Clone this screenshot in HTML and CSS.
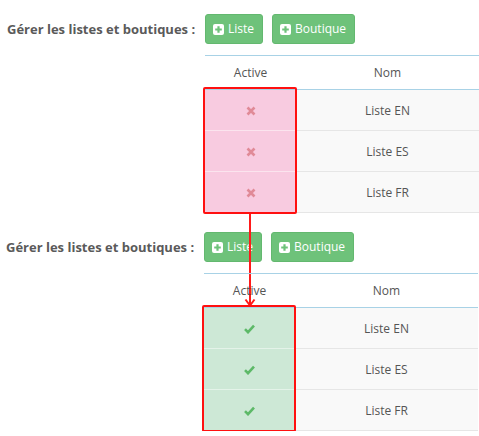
FILE: index.html
```html
<!DOCTYPE html>
<html lang="fr">
<head>
<meta charset="utf-8">
<title>Gérer les listes et boutiques</title>
<link rel="stylesheet" href="styles.css">
</head>
<body>
<div class="page">
  <section class="manage">
    <div class="manage-label">Gérer les listes et boutiques :</div>
    <div class="manage-actions">
      <button class="btn" type="button"><svg class="btn-icon" viewBox="0 0 11 11"><rect width="11" height="11" rx="2" fill="#fff"/><path d="M4.4 2.2h2.2v2.2h2.2v2.2H6.6v2.2H4.4V6.6H2.2V4.4h2.2z" fill="#6ec27a"/></svg>Liste</button>
      <button class="btn" type="button"><svg class="btn-icon" viewBox="0 0 11 11"><rect width="11" height="11" rx="2" fill="#fff"/><path d="M4.4 2.2h2.2v2.2h2.2v2.2H6.6v2.2H4.4V6.6H2.2V4.4h2.2z" fill="#6ec27a"/></svg>Boutique</button>
    </div>
    <div class="lists-wrap">
      <table class="lists">
        <colgroup><col class="col-active"><col></colgroup>
        <thead><tr><th>Active</th><th>Nom</th></tr></thead>
        <tbody>
          <tr><td class="state state--off"><svg class="ico-x" viewBox="0 0 10 10"><path d="M1.5 1.5l7 7M8.5 1.5l-7 7"/></svg></td><td>Liste EN</td></tr>
          <tr><td class="state state--off"><svg class="ico-x" viewBox="0 0 10 10"><path d="M1.5 1.5l7 7M8.5 1.5l-7 7"/></svg></td><td>Liste ES</td></tr>
          <tr><td class="state state--off"><svg class="ico-x" viewBox="0 0 10 10"><path d="M1.5 1.5l7 7M8.5 1.5l-7 7"/></svg></td><td>Liste FR</td></tr>
        </tbody>
      </table>
      <div class="highlight"></div>
    </div>
  </section>

  <svg class="arrow" viewBox="0 0 12 93"><path d="M6 0V91"/><path d="M1.5 85.5L6 91.5 10.5 85.5"/></svg>

  <section class="manage manage--after">
    <div class="manage-label">Gérer les listes et boutiques :</div>
    <div class="manage-actions">
      <button class="btn" type="button"><svg class="btn-icon" viewBox="0 0 11 11"><rect width="11" height="11" rx="2" fill="#fff"/><path d="M4.4 2.2h2.2v2.2h2.2v2.2H6.6v2.2H4.4V6.6H2.2V4.4h2.2z" fill="#6ec27a"/></svg>Liste</button>
      <button class="btn" type="button"><svg class="btn-icon" viewBox="0 0 11 11"><rect width="11" height="11" rx="2" fill="#fff"/><path d="M4.4 2.2h2.2v2.2h2.2v2.2H6.6v2.2H4.4V6.6H2.2V4.4h2.2z" fill="#6ec27a"/></svg>Boutique</button>
    </div>
    <div class="lists-wrap">
      <table class="lists">
        <colgroup><col class="col-active"><col></colgroup>
        <thead><tr><th>Active</th><th>Nom</th></tr></thead>
        <tbody>
          <tr><td class="state state--on"><svg class="ico-check" viewBox="0 0 12 10"><path d="M1.5 5.2l3 3 6-6.5"/></svg></td><td>Liste EN</td></tr>
          <tr><td class="state state--on"><svg class="ico-check" viewBox="0 0 12 10"><path d="M1.5 5.2l3 3 6-6.5"/></svg></td><td>Liste ES</td></tr>
          <tr><td class="state state--on"><svg class="ico-check" viewBox="0 0 12 10"><path d="M1.5 5.2l3 3 6-6.5"/></svg></td><td>Liste FR</td></tr>
        </tbody>
      </table>
      <div class="highlight"></div>
    </div>
  </section>
</div>
</body>
</html>
```

FILE: styles.css
```css
html, body {
  margin: 0;
  padding: 0;
  background: #fff;
  overflow: hidden;
}

body {
  font-family: "Open Sans", "Liberation Sans", sans-serif;
  color: #555;
}

.page {
  position: relative;
  padding-top: 14px;
}

.manage {
  display: grid;
  grid-template-columns: 205px 274px;
  row-gap: 11px;
}

.manage--after {
  margin-top: 19px;
  margin-left: -1px;
}

.manage-label {
  align-self: center;
  padding-left: 7px;
  font-size: 13px;
  font-weight: 700;
  color: #5a5a5a;
  white-space: nowrap;
}

.manage-actions {
  display: flex;
  gap: 9px;
}

.btn {
  display: inline-flex;
  align-items: center;
  gap: 4px;
  height: 30px;
  padding: 0 8px 0 7px;
  border: 1px solid #63b86f;
  border-radius: 3px;
  background: #6ec27a;
  color: #fff;
  font-family: "Open Sans", "Liberation Sans", sans-serif;
  font-size: 12px;
  line-height: 1;
}

.btn-icon {
  width: 11px;
  height: 11px;
  display: block;
}

.lists-wrap {
  grid-column: 2;
  position: relative;
}

.lists {
  width: 274px;
  border-collapse: collapse;
  table-layout: fixed;
  font-size: 12px;
}

.col-active {
  width: 91px;
}

.lists th {
  height: 33px;
  padding: 0;
  font-weight: 400;
  color: #555;
  text-align: center;
  vertical-align: middle;
  border-top: 1px solid #a8d2e6;
  border-bottom: 1px solid #a8d2e6;
}

.lists td {
  height: 40px;
  padding: 0;
  text-align: center;
  vertical-align: middle;
  background: #f9f9f9;
  border-bottom: 1px solid #e6e6e6;
  color: #555;
}

.lists td.state--off {
  background: #f8cbe0;
  border-bottom-color: #fbe4ee;
}

.lists td.state--on {
  background: #cde8d6;
  border-bottom-color: #e4f3e9;
}

.ico-x {
  width: 10px;
  height: 10px;
  display: inline-block;
  vertical-align: middle;
  fill: none;
  stroke: #e08a97;
  stroke-width: 2.6;
}

.ico-check {
  width: 13px;
  height: 10px;
  display: inline-block;
  vertical-align: middle;
  fill: none;
  stroke: #5db968;
  stroke-width: 2.6;
}

.highlight {
  position: absolute;
  left: -2px;
  top: 32px;
  width: 94px;
  height: 127px;
  box-sizing: border-box;
  border: 2px solid #ff1010;
  border-radius: 2px;
  pointer-events: none;
}

.arrow {
  position: absolute;
  left: 244px;
  top: 214px;
  width: 12px;
  height: 93px;
  fill: none;
  stroke: #ff1a1a;
  stroke-width: 2;
}
```
